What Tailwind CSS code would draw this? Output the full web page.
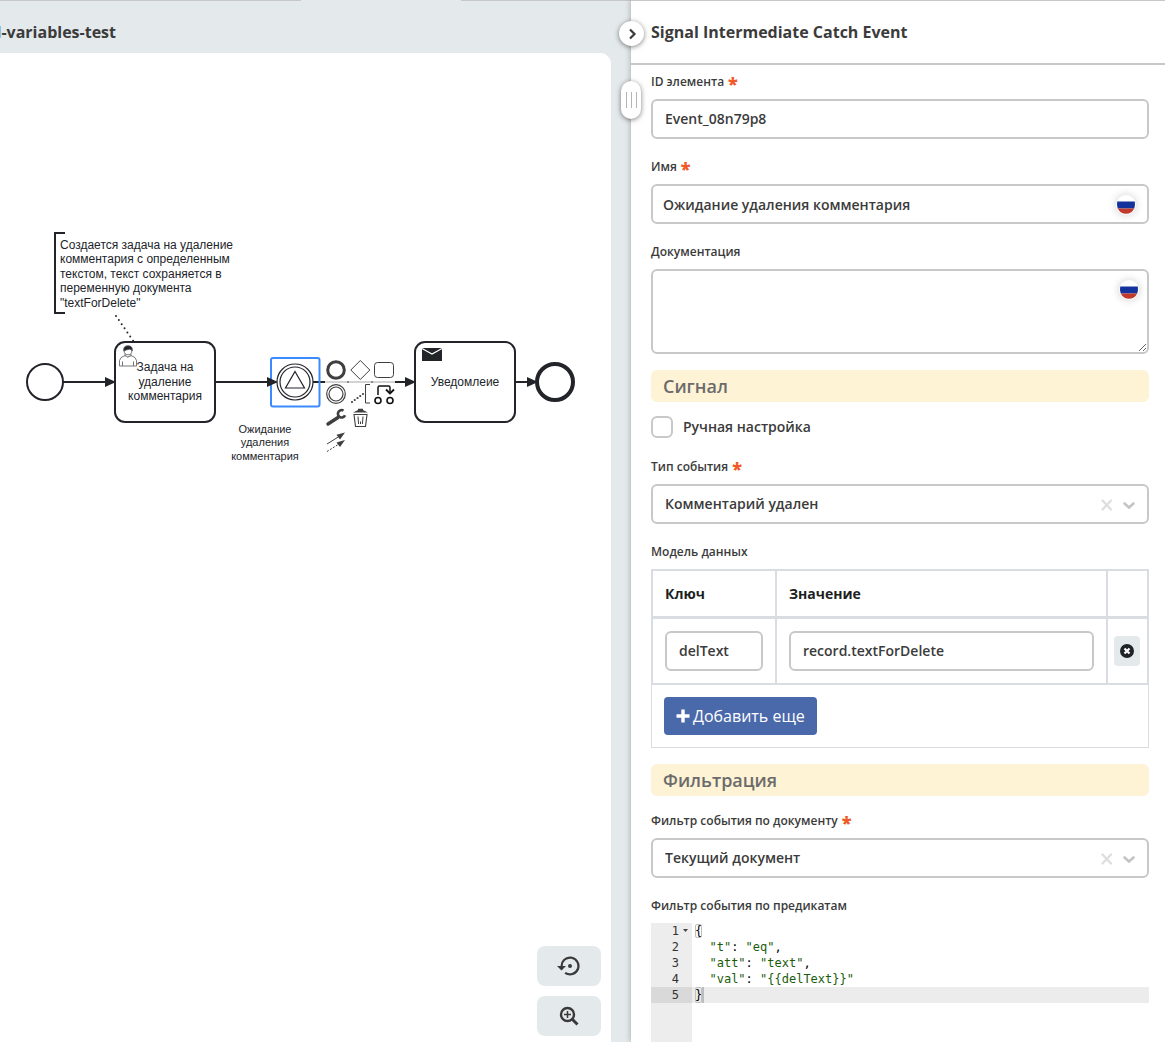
<!DOCTYPE html>
<html lang="ru">
<head>
<meta charset="utf-8">
<title>Signal Intermediate Catch Event</title>
<script src="https://cdn.jsdelivr.net/npm/@tailwindcss/browser@4"></script>
</head>
<body class="h-screen overflow-hidden bg-[#e4e9eb] font-['Open_Sans',sans-serif] text-[#3b3b3b]">
<div class="flex h-full">

  <!-- Diagram editor -->
  <main class="flex min-w-0 flex-1 flex-col">
    <div class="flex h-px shrink-0 justify-between">
      <span class="w-[301px] bg-[#c8c8c8]"></span>
      <span class="w-[170px] bg-[#c8c8c8]"></span>
    </div>
    <header class="flex h-[52px] shrink-0 items-start pt-[19px]">
      <h1 class="flex w-[116px] justify-end overflow-hidden text-base leading-6 font-bold whitespace-nowrap">l-variables-test</h1>
    </header>

    <section class="relative mr-5 min-h-0 flex-1 overflow-hidden rounded-tr-[11px] bg-white">
      <svg class="h-full w-full font-['Liberation_Sans',Arial,sans-serif]" fill="none" stroke="#22242a" stroke-width="2">
        <g transform="translate(0 -53)">
          <!-- annotation -->
          <path d="M65 233H55V313H65"/>
          <path d="M116 316L134 342" stroke-dasharray="0 5" stroke-linecap="round"/>
          <g fill="#22242a" stroke="none" font-size="12">
            <text x="60" y="249">Создается задача на удаление</text>
            <text x="60" y="263">комментария с определенным</text>
            <text x="60" y="278">текстом, текст сохраняется в</text>
            <text x="60" y="292">переменную документа</text>
            <text x="60" y="307">"textForDelete"</text>
          </g>
          <!-- flows -->
          <path d="M63 382H106M215 382H269M313 382H325M395 382H406M515 382H530"/>
          <path d="M325 382H395" stroke="#c4c4c4" stroke-width="1.5"/>
          <path d="M347 382H349M371 382H373" stroke="#777" stroke-width="1.5"/>
          <!-- start event -->
          <circle cx="45" cy="382" r="18" fill="#fff"/>
          <!-- user task -->
          <rect x="115" y="342" width="100" height="80" rx="10" fill="#fff"/>
          <g stroke="#55575c" stroke-width="0.8">
            <path d="M119.500 366V360.500Q120 357 125 355.500Q127.500 358.500 131 355.500Q136 357 136.500 360.500V366Z" fill="#fff"/>
            <path d="M122.500 366V361.500M133.500 366V361.500"/>
            <path d="M125 355.500Q127.500 358.500 131 355.500V353.500H125Z" fill="#fff"/>
            <ellipse cx="128" cy="350.500" rx="3.900" ry="4.300" fill="#fff"/>
            <path d="M123.800 351Q123 345.800 128 345.800Q133 345.800 132.200 351Q131.500 349 129.500 349.200Q126 349.800 123.800 351Z" fill="#22242a"/>
          </g>
          <g fill="#22242a" stroke="none" font-size="12" text-anchor="middle">
            <text x="165" y="371">Задача на</text>
            <text x="165" y="386">удаление</text>
            <text x="165" y="400">комментария</text>
          </g>
          <!-- signal catch event -->
          <rect x="271" y="358" width="48.500" height="48.500" rx="2" stroke="#3b8bff"/>
          <g stroke-width="1.200">
            <circle cx="295" cy="382" r="18" fill="#fff"/>
            <circle cx="295" cy="382" r="15"/>
            <path d="M295 371.500L304.500 388H285.500Z"/>
          </g>
          <g fill="#22242a" stroke="none" font-size="11" text-anchor="middle">
            <text x="265" y="433">Ожидание</text>
            <text x="265" y="446">удаления</text>
            <text x="265" y="460">комментария</text>
          </g>
          <!-- send task -->
          <rect x="415" y="342" width="100" height="80" rx="10" fill="#fff"/>
          <path d="M422 348H442V361H422Z" fill="#22242a" stroke="none"/>
          <path d="M422 348.500L432 354L442 348.500" stroke="#fff" stroke-width="1.200"/>
          <text x="465" y="386" fill="#22242a" stroke="none" font-size="12" text-anchor="middle">Уведомлеие</text>
          <!-- end event -->
          <circle cx="555" cy="382" r="18" fill="#fff" stroke-width="4"/>
          <!-- arrow heads -->
          <path d="M105 377L116 382L105 387ZM267 377L278 382L267 387ZM405 377L416 382L405 387ZM527 377L538 382L527 387Z" fill="#22242a" stroke="none"/>
        </g>
      </svg>

      <!-- context pad -->
      <div class="absolute top-[306px] left-[325px] grid grid-cols-3 gap-[2px]">
        <button class="size-[22px]" aria-label="Append end event"><svg viewBox="0 0 22 22" fill="none" stroke="#3f3f3f"><circle cx="11" cy="11" r="8.300" stroke-width="3"/></svg></button>
        <button class="size-[22px]" aria-label="Append gateway"><svg viewBox="0 0 22 22" fill="none" stroke="#3f3f3f"><path d="M11.300 1.500L20.800 11L11.300 20.500L1.800 11Z"/></svg></button>
        <button class="size-[22px]" aria-label="Append task"><svg viewBox="0 0 22 22" fill="none" stroke="#3f3f3f"><rect x="1.500" y="3.500" width="19" height="15" rx="3"/></svg></button>
        <button class="size-[22px]" aria-label="Append intermediate event"><svg viewBox="0 0 22 22" fill="none" stroke="#3f3f3f" stroke-width="1.200"><circle cx="11" cy="11" r="9.300"/><circle cx="11" cy="11" r="7"/></svg></button>
        <button class="size-[22px]" aria-label="Add annotation"><svg viewBox="0 0 22 22" fill="none" stroke="#3f3f3f"><path d="M21 1.500H16.500V20H21"/><path d="M3 19L14 11" stroke-width="2.200" stroke-dasharray="0 3.400" stroke-linecap="round"/></svg></button>
        <button class="size-[22px]" aria-label="Append element"><svg viewBox="0 0 22 22" fill="none" stroke="#111"><circle cx="5" cy="17.500" r="3" stroke-width="1.600"/><circle cx="17" cy="17.500" r="3" stroke-width="1.600"/><path d="M5 12V4.500Q5 3 6.500 3H15.500Q17 3 17 4.500V10" stroke-width="1.500"/><path d="M13 6.500L17 10.500L21 6.500" stroke-width="1.800"/></svg></button>
        <button class="size-[22px]" aria-label="Change type"><svg viewBox="0 0 22 22" fill="none" stroke="#3f3f3f"><path d="M3 17L13 10.500" stroke-width="3.400" stroke-linecap="round"/><path d="M18.500 3.600A3.700 3.700 0 1 0 20 8.200" stroke-width="2.600"/></svg></button>
        <button class="size-[22px]" aria-label="Remove"><svg viewBox="0 0 22 22" fill="none" stroke="#3f3f3f"><path d="M5 7.500H18L16.500 19.500H6.500Z" stroke-width="1.100"/><path d="M9 9.500L9.600 17M14 9.500L13.400 17M11.500 14.500V17" stroke-width="1"/><path d="M4 5.500L9 3V1.800H14V3L19 5.500Z" fill="#3f3f3f" stroke="none"/></svg></button>
        <span></span>
        <button class="size-[22px]" aria-label="Connect"><svg viewBox="0 0 22 22" fill="none" stroke="#3f3f3f"><path d="M2 13L14 5.500"/><path d="M2 20.500L14 13" stroke-dasharray="2 1.500"/><path d="M20 1.500L11.500 3.700L15 8.500ZM20 9L11.500 11.500L15 16Z" fill="#3f3f3f" stroke="none"/></svg></button>
      </div>

      <!-- canvas controls -->
      <div class="absolute right-[10px] bottom-[6px] flex flex-col gap-[10px]">
        <button class="grid h-10 w-16 place-items-center rounded-lg bg-[#e4e9eb]" aria-label="Reset zoom">
          <svg class="size-6" viewBox="0 0 24 24" fill="#3a3a3a"><path d="M15 12a2 2 0 1 0-4 0 2 2 0 0 0 4 0ZM13 2.500a9.500 9.500 0 0 0-9.500 9.500H0l4.500 4.500L9 12H5.700a7.300 7.300 0 1 1 3.200 6l-1.500 1.600A9.500 9.500 0 1 0 13 2.500Z"/></svg>
        </button>
        <button class="grid h-10 w-16 place-items-center rounded-lg bg-[#e4e9eb]" aria-label="Zoom in">
          <svg class="size-6" viewBox="0 0 24 24" fill="none" stroke="#3a3a3a"><circle cx="10.500" cy="10.500" r="6.500" stroke-width="2.400"/><path d="M15.500 15.500L20.500 20.500" stroke-width="3"/><path d="M10.500 7V14M7 10.500H14" stroke-width="1.500"/></svg>
        </button>
      </div>
    </section>
  </main>

  <!-- Properties panel -->
  <aside class="relative flex w-[534px] shrink-0 flex-col border-t border-[#c8c8c8] bg-white shadow-[0_0_6px_rgba(0,0,0,0.3)]">
    <button class="absolute top-5 -left-3 grid size-[25px] place-items-center rounded-full bg-white shadow-[0_1px_5px_rgba(0,0,0,0.5)]" aria-label="Collapse panel">
      <svg class="size-3" viewBox="0 0 12 12" fill="none" stroke="#3a3a3a" stroke-width="2.200"><path d="M4 1.500L8.500 6L4 10.500"/></svg>
    </button>
    <button class="absolute top-20 -left-[10px] flex h-[38px] w-5 items-center justify-center gap-1 rounded-[10px] bg-white shadow-[0_1px_5px_rgba(0,0,0,0.5)]" aria-label="Resize panel">
      <span class="h-4 w-px bg-[#b5b5b5]"></span><span class="h-4 w-px bg-[#b5b5b5]"></span><span class="h-4 w-px bg-[#b5b5b5]"></span>
    </button>

    <header class="h-16 shrink-0 border-b-2 border-[#c8c8c8] px-5 pt-[19px]">
      <h2 class="text-base leading-6 font-bold">Signal Intermediate Catch Event</h2>
    </header>

    <form class="flex min-h-0 flex-1 flex-col overflow-hidden pt-[6px] pr-4 pl-5">
      <div class="mb-[17px] flex flex-col gap-2">
        <label for="eid" class="flex h-5 gap-1 text-xs leading-[22px] font-semibold">ID элемента <span class="text-lg leading-6 font-extrabold text-[#f05a28]">*</span></label>
        <input id="eid" value="Event_08n79p8" class="h-10 w-full rounded-md border-2 border-[#c8c8c8] bg-white px-3 pb-[2px] text-sm font-semibold outline-none">
      </div>
      <div class="mb-[17px] flex flex-col gap-2">
        <label for="ename" class="flex h-5 gap-1 text-xs leading-[22px] font-semibold">Имя <span class="text-lg leading-6 font-extrabold text-[#f05a28]">*</span></label>
        <div class="relative">
          <input id="ename" value="Ожидание удаления комментария" class="block h-10 w-full rounded-md border-2 border-[#c8c8c8] bg-white pr-12 pl-[10px] text-sm font-semibold outline-none">
          <button type="button" class="absolute top-[11px] right-[13px] size-5 rounded-full bg-white shadow-[0_0_8px_rgba(0,0,0,0.2)]" aria-label="Русский"><svg viewBox="0 0 20 20"><path d="M1.200 6.500H18.800Q19.400 10 18.300 13.500H1.700Q0.600 10 1.200 6.500Z" fill="#14329b"/><path d="M1.700 13.500H18.300Q15.500 18.800 10 18.800Q4.500 18.800 1.700 13.500Z" fill="#c0392b"/></svg></button>
        </div>
      </div>
      <div class="mb-4 flex flex-col gap-2">
        <label for="edoc" class="h-5 text-xs leading-[22px] font-semibold">Документация</label>
        <div class="relative">
          <textarea id="edoc" class="block h-[85px] w-full resize-y rounded-md border-2 border-[#c8c8c8] bg-white p-2 text-sm outline-none"></textarea>
          <button type="button" class="absolute top-[11px] right-[10px] size-5 rounded-full bg-white shadow-[0_0_8px_rgba(0,0,0,0.2)]" aria-label="Русский"><svg viewBox="0 0 20 20"><path d="M1.200 6.500H18.800Q19.400 10 18.300 13.500H1.700Q0.600 10 1.200 6.500Z" fill="#14329b"/><path d="M1.700 13.500H18.300Q15.500 18.800 10 18.800Q4.500 18.800 1.700 13.500Z" fill="#c0392b"/></svg></button>
        </div>
      </div>

      <h3 class="mb-[14px] h-8 shrink-0 rounded-md bg-[#fef3d5] px-3 text-lg leading-8 font-semibold text-[#6b6b6b]">Сигнал</h3>

      <div class="mb-[18px] flex h-[22px] shrink-0 items-center gap-[10px]">
        <input id="manual" type="checkbox" class="size-[22px] appearance-none rounded-[6px] border-2 border-[#c8c8c8] bg-white">
        <label for="manual" class="text-sm font-semibold">Ручная настройка</label>
      </div>

      <div class="mb-[17px] flex flex-col gap-2">
        <label for="etype" class="flex h-5 gap-1 text-xs leading-[22px] font-semibold">Тип события <span class="text-lg leading-6 font-extrabold text-[#f05a28]">*</span></label>
        <div class="relative">
          <select id="etype" class="block h-10 w-full appearance-none rounded-md border-2 border-[#c8c8c8] bg-white px-3 text-sm font-semibold outline-none"><option>Комментарий удален</option></select>
          <svg class="pointer-events-none absolute top-[14px] right-3 h-[14px] w-9" viewBox="0 0 36 14" fill="none" stroke-linecap="round"><path d="M1.500 2.500L10 11.500M10 2.500L1.500 11.500" stroke="#dedede" stroke-width="2.400"/><path d="M23.500 5.500L28 9.500L32.500 5.500" stroke="#c4c4c4" stroke-width="2.600"/></svg>
        </div>
      </div>

      <div class="mb-2 h-5 shrink-0 text-xs leading-[22px] font-semibold" id="model">Модель данных</div>
      <table aria-labelledby="model" class="w-full table-fixed border-collapse border-2 border-[#d9dde2]">
        <colgroup><col class="w-[124px]"><col><col class="w-[41px]"></colgroup>
        <thead>
          <tr class="h-[47px] border-b-3 border-[#d9dde2] text-left text-sm text-[#1d1f22]">
            <th class="border-r-2 border-[#d9dde2] px-3 pt-[2px] pb-0 font-bold">Ключ</th>
            <th class="border-r-2 border-[#d9dde2] px-3 pt-[2px] pb-0 font-bold">Значение</th>
            <td></td>
          </tr>
        </thead>
        <tbody>
          <tr>
            <td class="border-r-2 border-[#d9dde2] p-3"><input aria-label="Ключ" value="delText" class="block h-10 w-full rounded-md border-2 border-[#c8c8c8] bg-white px-3 text-sm font-semibold outline-none"></td>
            <td class="border-r-2 border-[#d9dde2] p-3"><input aria-label="Значение" value="record.textForDelete" class="block h-10 w-full rounded-md border-2 border-[#c8c8c8] bg-white px-3 text-sm font-semibold outline-none"></td>
            <td class="pr-[7px] pl-[6px]"><button type="button" class="grid h-[30px] w-full place-items-center rounded bg-[#e4e9eb]" aria-label="Удалить"><svg class="size-[14px]" viewBox="0 0 14 14"><circle cx="7" cy="7" r="7" fill="#1f2227"/><path d="M4.500 4.500L9.500 9.500M9.500 4.500L4.500 9.500" stroke="#fff" stroke-width="2.200"/></svg></button></td>
          </tr>
        </tbody>
      </table>
      <div class="mb-4 shrink-0 border border-t-0 border-[#d9dde2] p-3">
        <button type="button" class="flex h-[38px] items-center gap-[3px] rounded bg-[#4a69ab] px-3 text-base leading-6 text-white"><svg class="size-[14px]" viewBox="0 0 14 14" fill="none" stroke="#fff" stroke-width="3.400" stroke-linejoin="round"><path d="M7 0.500V13.500M0.500 7H13.500"/></svg>Добавить еще</button>
      </div>

      <h3 class="mb-[14px] h-8 shrink-0 rounded-md bg-[#fef3d5] px-3 text-lg leading-8 font-semibold text-[#6b6b6b]">Фильтрация</h3>

      <div class="mb-[17px] flex flex-col gap-2">
        <label for="edocf" class="flex h-5 gap-1 text-xs leading-[22px] font-semibold">Фильтр события по документу <span class="text-lg leading-6 font-extrabold text-[#f05a28]">*</span></label>
        <div class="relative">
          <select id="edocf" class="block h-10 w-full appearance-none rounded-md border-2 border-[#c8c8c8] bg-white px-3 text-sm font-semibold outline-none"><option>Текущий документ</option></select>
          <svg class="pointer-events-none absolute top-[14px] right-3 h-[14px] w-9" viewBox="0 0 36 14" fill="none" stroke-linecap="round"><path d="M1.500 2.500L10 11.500M10 2.500L1.500 11.500" stroke="#dedede" stroke-width="2.400"/><path d="M23.500 5.500L28 9.500L32.500 5.500" stroke="#c4c4c4" stroke-width="2.600"/></svg>
        </div>
      </div>

      <div class="mb-2 h-5 shrink-0 text-xs leading-[22px] font-semibold">Фильтр события по предикатам</div>
      <div class="flex flex-1 font-['DejaVu_Sans_Mono',monospace] text-xs leading-4 text-black">
        <div class="w-[41px] shrink-0 bg-[#ededed] text-[#333]">
          <div class="flex items-center justify-end gap-1 pr-[4px]">1<svg class="h-1 w-[5px]" viewBox="0 0 5 4"><path d="M0 0H5L2.500 3Z" fill="#444"/></svg></div>
          <div class="pr-[13px] text-right">2</div>
          <div class="pr-[13px] text-right">3</div>
          <div class="pr-[13px] text-right">4</div>
          <div class="bg-[#d9d9d9] pr-[13px] text-right">5</div>
        </div>
        <div class="flex-1">
          <div class="pl-[3px] whitespace-pre"><span class="rounded-xs outline outline-[#c0c0c0] -outline-offset-1">{</span></div>
          <div class="pl-[3px] whitespace-pre">  <span class="text-[#1a5c0a]">"t"</span>: <span class="text-[#1a5c0a]">"eq"</span>,</div>
          <div class="pl-[3px] whitespace-pre">  <span class="text-[#1a5c0a]">"att"</span>: <span class="text-[#1a5c0a]">"text"</span>,</div>
          <div class="pl-[3px] whitespace-pre">  <span class="text-[#1a5c0a]">"val"</span>: <span class="text-[#1a5c0a]">"{{delText}}"</span></div>
          <div class="flex bg-[#ececec] pl-[3px] whitespace-pre"><span class="rounded-xs outline outline-[#c0c0c0] -outline-offset-1">}</span><span class="w-[2px] bg-[#bdbdbd]"></span></div>
        </div>
      </div>
    </form>
  </aside>
</div>
</body>
</html>
